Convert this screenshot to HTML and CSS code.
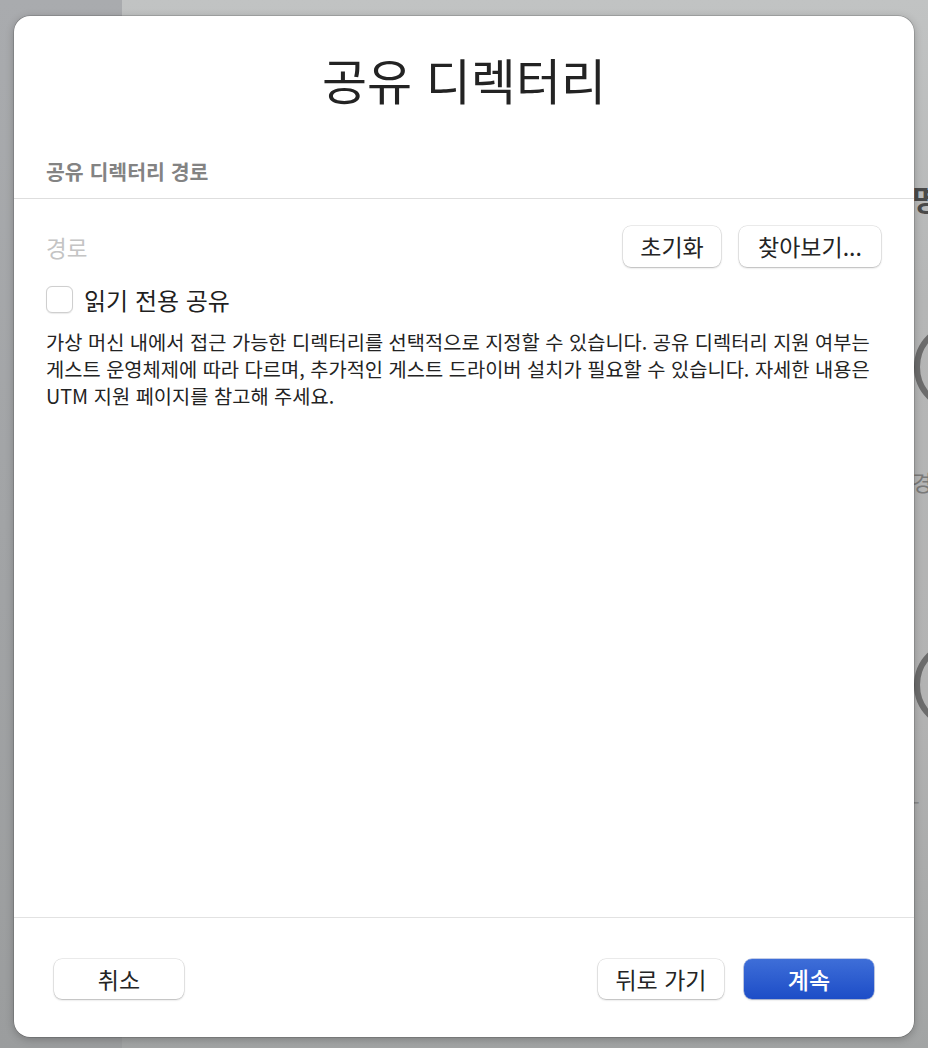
FILE: index.html
```html
<!DOCTYPE html>
<html lang="ko">
<head>
<meta charset="UTF-8">
<title>공유 디렉터리</title>
<link rel="stylesheet" href="styles.css">
</head>
<body>
<div class="screen">
  <!-- window behind the sheet -->
  <div class="backdrop">
    <div class="bd-sidebar"></div>
    <div class="bd-main">
      <span class="bd-text bd-t1">명</span>
      <span class="bd-ring bd-r1"></span>
      <span class="bd-text bd-t2">경</span>
      <span class="bd-ring bd-r2"></span>
      <span class="bd-text bd-t3">-</span>
    </div>
  </div>

  <div class="sheet">
    <div class="sheet-head">
      <h1 class="title">공유 디렉터리</h1>
      <div class="section-label">공유 디렉터리 경로</div>
    </div>

    <div class="sheet-body">
      <div class="path-row">
        <span class="path-placeholder">경로</span>
        <div class="btn-group">
          <button class="btn btn-reset">초기화</button>
          <button class="btn btn-browse">찾아보기...</button>
        </div>
      </div>

      <label class="check-row">
        <span class="checkbox"></span>
        <span class="check-label">읽기 전용 공유</span>
      </label>

      <p class="desc">가상 머신 내에서 접근 가능한 디렉터리를 선택적으로 지정할 수 있습니다. 공유 디렉터리 지원 여부는<br>게스트 운영체제에 따라 다르며, 추가적인 게스트 드라이버 설치가 필요할 수 있습니다. 자세한 내용은<br>UTM 지원 페이지를 참고해 주세요.</p>
    </div>

    <div class="sheet-foot">
      <button class="btn btn-foot btn-cancel">취소</button>
      <div class="btn-group foot-right">
        <button class="btn btn-foot btn-back">뒤로 가기</button>
        <button class="btn btn-foot btn-primary">계속</button>
      </div>
    </div>
  </div>
</div>
</body>
</html>
```

FILE: styles.css
```css
html, body {
	margin: 0;
	padding: 0;
}
body {
	font-family: "Noto Sans CJK KR", "Noto Sans", sans-serif;
	color: #222222;
}
.screen {
	position: relative;
	width: 928px;
	height: 1048px;
	overflow: hidden;
	padding: 16px 14px 0 14px;
	box-sizing: border-box;
}

/* backdrop window */
.backdrop {
	position: absolute;
	inset: 0;
	display: flex;
}
.bd-sidebar {
	width: 122px;
	background: linear-gradient(#a9abae, #9b9d9e);
}
.bd-main {
	flex: 1;
	position: relative;
	background: linear-gradient(#c1c3c3 0, #b5b6b6 300px, #b3b3b3 700px, #a2a4a4 100%);
}
.bd-ring {
	position: absolute;
	left: 792px;
	width: 78px;
	height: 78px;
	border: 6px solid #6c6c6c;
	border-radius: 50%;
}
.bd-r1 { top: 322px; }
.bd-r2 { top: 640px; }
.bd-text {
	position: absolute;
	left: 790px;
	font-size: 26px;
	color: #5a5a5a;
}
.bd-t1 { top: 176px; font-size: 30px; font-weight: 700; color: #4a4a4a; }
.bd-t2 { top: 465px; font-size: 22px; color: #7a7a7a; }
.bd-t3 { top: 785px; font-size: 22px; color: #8a8a8a; }

/* sheet */
.sheet {
	position: relative;
	width: 900px;
	height: 1021px;
	background: #ffffff;
	border-radius: 16px;
	box-shadow: 0 0 0 0.5px rgba(0, 0, 0, 0.25), 0 2px 8px rgba(0, 0, 0, 0.25);
	display: flex;
	flex-direction: column;
}
.sheet-head {
	padding: 32px 32px 13px 32px;
	border-bottom: 1px solid #dedede;
}
.title {
	margin: 0;
	font-size: 49px;
	font-weight: 400;
	line-height: 62px;
	text-align: center;
	color: #232323;
}
.section-label {
	margin-top: 48px;
	font-size: 20.5px;
	font-weight: 700;
	line-height: 27px;
	color: #838383;
}

.sheet-body {
	flex: 1;
	padding: 27px 33px 0 32px;
}
.path-row {
	display: flex;
	align-items: center;
	justify-content: space-between;
}
.path-placeholder {
	font-size: 22.5px;
	color: #c4c4c4;
}
.btn-group {
	display: flex;
	gap: 18px;
}
.btn {
	font-family: "Noto Sans CJK KR", "Noto Sans", sans-serif;
	font-size: 23px;
	color: #242424;
	background: #ffffff;
	border: none;
	border-radius: 8px;
	box-shadow: 0 0 0 0.5px rgba(0, 0, 0, 0.14), 0 1px 2px rgba(0, 0, 0, 0.22);
	height: 41px;
	padding: 0;
	line-height: 41px;
}
.btn-reset { width: 98px; }
.btn-browse { width: 142px; }

.check-row {
	display: flex;
	align-items: center;
	gap: 11px;
	margin-top: 19px;
}
.checkbox {
	width: 25px;
	height: 25px;
	border: 1px solid #cfcfcf;
	border-radius: 6px;
	background: #ffffff;
	box-shadow: 0 0.5px 1px rgba(0, 0, 0, 0.08);
}
.check-label {
	font-size: 24px;
	line-height: 27px;
	color: #1f1f1f;
}
.desc {
	margin: 15px 0 0 0;
	font-size: 19.8px;
	line-height: 27px;
	color: #232323;
	white-space: nowrap;
}

.sheet-foot {
	height: 120px;
	border-top: 1px solid #e2e2e2;
	display: flex;
	align-items: flex-start;
	justify-content: space-between;
	padding: 41px 40px 0 40px;
	box-sizing: border-box;
}
.foot-right {
	gap: 20px;
}
.btn-foot {
	height: 40px;
	line-height: 40px;
}
.btn-cancel { width: 130px; }
.btn-back { width: 126px; }
.btn-primary {
	width: 130px;
	color: #ffffff;
	font-weight: 500;
	background: linear-gradient(#3e6ed8, #1d4dc7);
	box-shadow: 0 0 0 0.5px rgba(20, 60, 170, 0.5), 0 1px 2px rgba(0, 0, 0, 0.2);
}
```
